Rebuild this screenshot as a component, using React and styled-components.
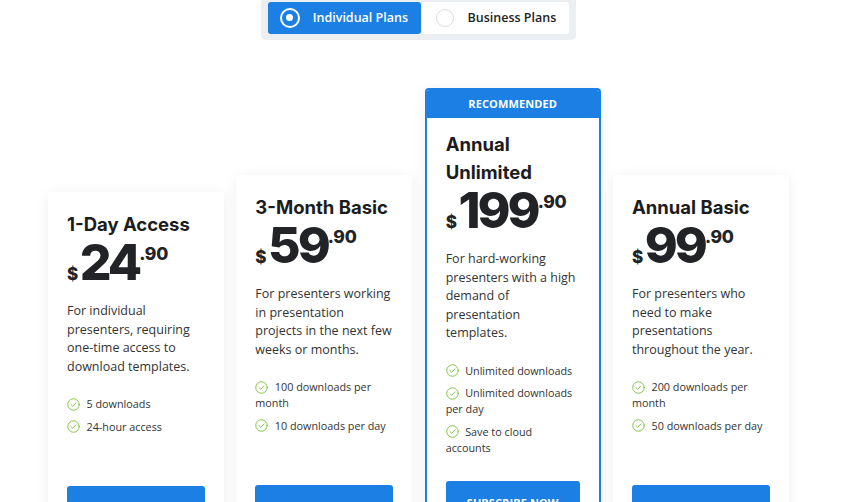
import React from "react";
import styled, { createGlobalStyle } from "styled-components";

const BLUE = "#1b7fe3";

const Global = createGlobalStyle`
  html, body { margin: 0; padding: 0; background: #fff; overflow: hidden; }
  body { font-family: "Open Sans", "Liberation Sans", sans-serif; color: #333; }
  * { box-sizing: border-box; }
`;

const Page = styled.div`
  width: 837px;
  display: flex;
  flex-direction: column;
  align-items: center;
`;

const Toggle = styled.div`
  margin-top: -4px;
  display: flex;
  gap: 1px;
  padding: 6px 7px;
  background: #eceff2;
  border-radius: 0 0 5px 5px;
`;

const ToggleButton = styled.button`
  display: flex;
  align-items: center;
  gap: ${(p) => (p.$active ? "13px" : "13.5px")};
  height: 31.5px;
  padding: 0 ${(p) => (p.$active ? "13px 0 12px" : "13px 0 14px")};
  border: none;
  border-radius: 3px;
  background: ${(p) => (p.$active ? BLUE : "#fff")};
  color: ${(p) => (p.$active ? "#fff" : "#222")};
  font-family: "Open Sans", sans-serif;
  font-size: 12.5px;
  font-weight: 600;
  cursor: pointer;
`;

const Radio = styled.span`
  position: relative;
  width: ${(p) => (p.$active ? "20px" : "18px")};
  height: ${(p) => (p.$active ? "20px" : "18px")};
  border-radius: 50%;
  border: ${(p) => (p.$active ? "2px solid #fff" : "1.5px solid #dadde1")};
  background: ${(p) => (p.$active ? BLUE : "#fff")};
  flex: none;
  &::after {
    content: "";
    display: ${(p) => (p.$active ? "block" : "none")};
    position: absolute;
    left: 50%;
    top: 50%;
    width: 7px;
    height: 7px;
    margin: -3.5px 0 0 -3.5px;
    border-radius: 50%;
    background: #fff;
  }
`;

const Cards = styled.div`
  margin-top: 48.7px;
  display: flex;
  align-items: flex-start;
  gap: 12.33px;
`;

const Card = styled.div`
  width: 176px;
  margin-top: ${(p) => p.$offset}px;
  background: #fff;
  border-radius: 4px;
  border: ${(p) => (p.$featured ? `2px solid ${BLUE}` : "none")};
  box-shadow: 0 2px 14px rgba(0, 0, 0, 0.07);
  overflow: hidden;
`;

const Ribbon = styled.div`
  height: 28px;
  background: ${BLUE};
  color: #fff;
  font-size: 11px;
  font-weight: 700;
  line-height: 28px;
  text-align: center;
  letter-spacing: 0.1px;
`;

const Body = styled.div`
  padding: ${(p) => (p.$featured ? "12.3px" : "18.3px")} 19px 24px;
  display: flex;
  flex-direction: column;
`;

const Title = styled.h3`
  margin: 0;
  font-family: Inter, "DejaVu Sans", sans-serif;
  font-weight: 700;
  font-size: 18.5px;
  line-height: 28px;
  color: #1c1c1e;
  white-space: nowrap;
`;

const Price = styled.div`
  display: flex;
  align-items: baseline;
  height: 48px;
  line-height: 48px;
  font-family: Inter, "DejaVu Sans", sans-serif;
  font-weight: 800;
  color: #222326;
`;

const Dollar = styled.span`
  font-size: 17px;
  line-height: 17px;
  margin-right: 1.5px;
`;

const Amount = styled.span`
  font-size: 50px;
  letter-spacing: -3px;
`;

const Cents = styled.span`
  align-self: flex-start;
  margin-top: 7px;
  margin-left: 0;
  font-size: 17.5px;
  line-height: 18px;
  letter-spacing: -0.3px;
`;

const Desc = styled.p`
  margin: 16px 0 0;
  font-size: 12.5px;
  line-height: 18.5px;
  color: #333;
  white-space: nowrap;
`;

const Features = styled.ul`
  margin: 20px 0 0;
  padding: 0;
  list-style: none;
  display: flex;
  flex-direction: column;
  gap: 6.4px;
`;

const Feature = styled.li`
  font-size: 10.8px;
  line-height: 16px;
  color: #333;
  white-space: nowrap;
`;

const Check = styled.svg`
  display: inline-block;
  width: 13px;
  height: 13px;
  margin-right: 6.5px;
  vertical-align: -2.5px;
`;

const Subscribe = styled.button`
  margin-top: ${(p) => p.$gap}px;
  width: 100%;
  height: 42px;
  border: none;
  border-radius: 3px;
  background: ${BLUE};
  color: #fff;
  font-family: "Open Sans", sans-serif;
  font-size: 11px;
  font-weight: 700;
  letter-spacing: 0.1px;
  cursor: pointer;
`;

const CheckIcon = () => (
  <Check viewBox="0 0 24 24" fill="none" stroke="#7fc244" strokeWidth="1.8" strokeLinecap="round" strokeLinejoin="round">
    <circle cx="12" cy="12" r="10.6" />
    <path d="M7.6 12.4l3 3 5.8-6.2" />
  </Check>
);

const lines = (arr) =>
  arr.map((l, i) => (
    <React.Fragment key={i}>
      {i > 0 && <br />}
      {l}
    </React.Fragment>
  ));

const plans = [
  {
    offset: 104,
    title: ["1-Day Access"],
    amount: "24",
    desc: ["For individual", "presenters, requiring", "one-time access to", "download templates."],
    features: [["5 downloads"], ["24-hour access"]],
  },
  {
    offset: 87,
    title: ["3-Month Basic"],
    amount: "59",
    desc: ["For presenters working", "in presentation", "projects in the next few", "weeks or months."],
    features: [["100 downloads per", "month"], ["10 downloads per day"]],
  },
  {
    offset: 0,
    featured: true,
    title: ["Annual", "Unlimited"],
    amount: "199",
    desc: ["For hard-working", "presenters with a high", "demand of", "presentation", "templates."],
    features: [["Unlimited downloads"], ["Unlimited downloads", "per day"], ["Save to cloud", "accounts"]],
  },
  {
    offset: 87,
    title: ["Annual Basic"],
    amount: "99",
    desc: ["For presenters who", "need to make", "presentations", "throughout the year."],
    features: [["200 downloads per", "month"], ["50 downloads per day"]],
  },
];

export default function App() {
  return (
    <>
      <Global />
      <Page>
        <Toggle>
          <ToggleButton $active>
            <Radio $active />
            Individual Plans
          </ToggleButton>
          <ToggleButton>
            <Radio />
            Business Plans
          </ToggleButton>
        </Toggle>
        <Cards>
          {plans.map((p, i) => (
            <Card key={i} $offset={p.offset} $featured={p.featured}>
              {p.featured && <Ribbon>RECOMMENDED</Ribbon>}
              <Body $featured={p.featured}>
                <Title>{lines(p.title)}</Title>
                <Price>
                  <Dollar>$</Dollar>
                  <Amount>{p.amount}</Amount>
                  <Cents>.90</Cents>
                </Price>
                <Desc>{lines(p.desc)}</Desc>
                <Features>
                  {p.features.map((f, j) => (
                    <Feature key={j}>
                      <CheckIcon />
                      {lines(f)}
                    </Feature>
                  ))}
                </Features>
                <Subscribe $gap={p.featured ? 25.7 : 51.5}>SUBSCRIBE NOW</Subscribe>
              </Body>
            </Card>
          ))}
        </Cards>
      </Page>
    </>
  );
}
